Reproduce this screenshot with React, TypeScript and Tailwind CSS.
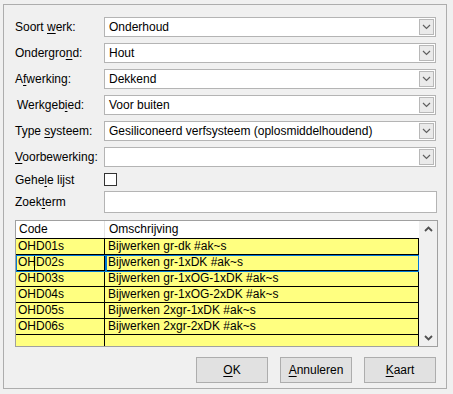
import React from "react";

type LabelProps = { before: string; key_: string; after: string };

function Acc({ before, key_, after }: LabelProps) {
  return (
    <span>
      {before}
      <span className="underline underline-offset-[2px]">{key_}</span>
      {after}
    </span>
  );
}

function Chevron({ up = false, bold = false }: { up?: boolean; bold?: boolean }) {
  return (
    <svg width="9" height="6" viewBox="0 0 9 6" className={up ? "rotate-180" : ""}>
      <path
        d="M1 1 L4.5 4.5 L8 1"
        fill="none"
        stroke={bold ? "#505050" : "#606060"}
        strokeWidth={bold ? 1.8 : 1.2}
      />
    </svg>
  );
}

function Combo({ value }: { value: string }) {
  return (
    <div className="flex h-[20px] w-[332px] items-stretch border border-[#b4b4b4] bg-white">
      <div className="flex-1 truncate pl-[4px] leading-[18px]">{value}</div>
      <div className="my-[1px] mr-[1px] flex w-[15px] items-center justify-center border border-[#b8b8b8] bg-[#eaeaea]">
        <Chevron />
      </div>
    </div>
  );
}

const rows = [
  ["OHD01s", "Bijwerken gr-dk #ak~s"],
  ["OHD02s", "Bijwerken gr-1xDK #ak~s"],
  ["OHD03s", "Bijwerken gr-1xOG-1xDK #ak~s"],
  ["OHD04s", "Bijwerken gr-1xOG-2xDK #ak~s"],
  ["OHD05s", "Bijwerken 2xgr-1xDK #ak~s"],
  ["OHD06s", "Bijwerken 2xgr-2xDK #ak~s"],
];

export default function App() {
  const fields: { label: React.ReactNode; value: string; indent?: boolean }[] = [
    { label: <Acc before="Soort " key_="w" after="erk:" />, value: "Onderhoud" },
    { label: <Acc before="Ondergro" key_="n" after="d:" />, value: "Hout" },
    { label: <Acc before="A" key_="f" after="werking:" />, value: "Dekkend" },
    { label: <Acc before="Werkgeb" key_="i" after="ed:" />, value: "Voor buiten", indent: true },
    { label: <Acc before="Type " key_="s" after="ysteem:" />, value: "Gesiliconeerd verfsysteem (oplosmiddelhoudend)" },
    { label: <Acc before="" key_="V" after="oorbewerking:" />, value: "" },
  ];

  return (
    <div
      className="h-[394px] w-[453px] overflow-hidden bg-[#f0f0f0] pl-[3px] pt-[4px] text-[12px] text-black"
      style={{ fontFamily: '"Liberation Sans", Arial, sans-serif' }}
    >
      <div className="flex h-[385px] w-[444px] flex-col border border-[#adadad] pl-[11px] pt-[12px]">
        {fields.map((f, i) => (
          <div key={i} className="mb-[6px] flex h-[20px] items-center">
            <div className={`w-[89px] ${f.indent ? "pl-[2px]" : ""}`}>{f.label}</div>
            <Combo value={f.value} />
          </div>
        ))}

        <div className="-mt-[2px] flex h-[17px] items-center">
          <div className="w-[89px]">
            <Acc before="Gehe" key_="l" after="e lijst" />
          </div>
          <div className="h-[13px] w-[13px] border border-[#333333] bg-white" />
        </div>

        <div className="mt-[3px] flex h-[22px] items-center">
          <div className="w-[89px]">
            <Acc before="Zoek" key_="t" after="erm" />
          </div>
          <div className="h-[22px] w-[333px] border border-[#b4b4b4] bg-white" />
        </div>

        <div className="relative mt-[7px] flex h-[127px] w-[423px] border border-[#a0a0a0] bg-white">
          <div className="flex w-[403px] flex-col">
            <div className="flex h-[18px] border-b border-black bg-white leading-[17px]">
              <div className="w-[89px] border-r border-[#e3e3e3] pl-[3px]">Code</div>
              <div className="flex-1 pl-[4px]">Omschrijving</div>
            </div>
            {rows.map(([code, desc], i) => (
              <div key={code} className="flex h-[16px] border-b border-black bg-[#ffff80] leading-[15px]">
                <div className="relative w-[89px] border-r border-black pl-[2px]">
                  {code}
                  {i === 1 && <span className="absolute left-[18px] top-[1px] h-[14px] w-px bg-black" />}
                </div>
                <div className="flex-1 border-r border-black pl-[3px]">{desc}</div>
              </div>
            ))}
            <div className="flex flex-1 bg-[#ffff80]">
              <div className="w-[89px] border-r border-black" />
              <div className="flex-1 border-r border-black" />
            </div>
          </div>
          <div className="flex flex-1 flex-col items-center justify-between bg-[#f0f0f0] py-[5px]">
            <Chevron up bold />
            <Chevron bold />
          </div>

          <div className="pointer-events-none absolute left-0 top-[34px] h-[17px] w-[90px] border border-[#0078d7]" />
          <div className="pointer-events-none absolute left-[90px] top-[34px] h-[17px] w-[313px] border border-[#0078d7]" />
        </div>

        <div className="mt-[10px] flex justify-end gap-[12px] pr-[10px]">
          {[
            ["", "O", "K"],
            ["", "A", "nnuleren"],
            ["", "K", "aart"],
          ].map(([b, k, a]) => (
            <div
              key={k + a}
              className="flex h-[26px] w-[72px] items-center justify-center border border-[#adadad] bg-[#e1e1e1]"
            >
              <Acc before={b} key_={k} after={a} />
            </div>
          ))}
        </div>
      </div>
    </div>
  );
}
